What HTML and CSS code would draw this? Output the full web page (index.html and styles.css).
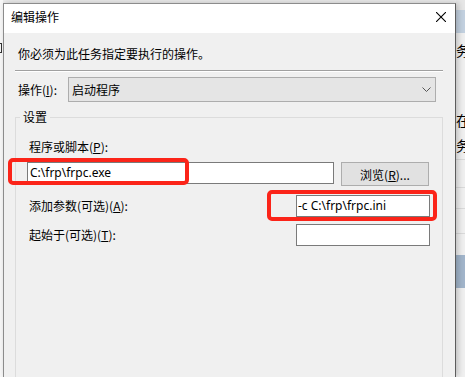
FILE: index.html
```
<!DOCTYPE html>
<html lang="zh-CN">

<head>
    <meta charset="UTF-8">
    <title>编辑操作</title>
    <link rel="stylesheet" href="styles.css">
</head>

<body>

    <div class="desk">
        <div class="back-left"><span class="frag"></span></div>

        <div class="dialog">
            <div class="titlebar">
                <span class="title">编辑操作</span>
                <svg class="close" width="10" height="10" viewBox="0 0 10 10">
                    <path d="M0 0 L10 10 M10 0 L0 10" stroke="#000" stroke-width="1.1" fill="none"/>
                </svg>
            </div>

            <div class="panel">
                <p class="hint">你必须为此任务指定要执行的操作。</p>
                <div class="sep"></div>

                <div class="action-row">
                    <label class="action-label">操作(<u>I</u>):</label>
                    <div class="combo">
                        <span>启动程序</span>
                        <svg width="9" height="5" viewBox="0 0 9 5">
                            <polyline points="0.5,0.5 4.5,4.5 8.5,0.5" stroke="#555" fill="none"/>
                        </svg>
                    </div>
                </div>

                <fieldset class="group">
                    <legend>设置</legend>

                    <div class="field-label">程序或脚本(<u>P</u>):</div>
                    <div class="prog-row">
                        <div class="input wide">C:\frp\frpc.exe</div>
                        <button class="btn">浏览(<u>R</u>)...</button>
                    </div>

                    <div class="arg-row">
                        <label class="arg-label">添加参数(可选)(<u>A</u>):</label>
                        <div class="input narrow">-c C:\frp\frpc.ini</div>
                    </div>

                    <div class="arg-row low">
                        <label class="arg-label">起始于(可选)(<u>T</u>):</label>
                        <div class="input narrow"></div>
                    </div>
                </fieldset>
            </div>
        </div>

        <div class="back-right">
            <div class="rs-top"></div>
            <div class="rs-band head"></div>
            <div class="rs-char first">务</div>
            <div class="rs-char mid">在</div>
            <div class="rs-char">务</div>
            <div class="rs-line l1"></div>
            <div class="rs-line l2"></div>
            <div class="rs-line l3"></div>
            <div class="rs-line l4"></div>
            <div class="rs-band sel"></div>
        </div>

        <!-- red annotation boxes drawn over the screenshot -->
        <div class="mark mark-prog"></div>
        <div class="mark mark-args"></div>
    </div>

</body>

</html>
```

FILE: styles.css
```
* {
    box-sizing: border-box;
}

body {
    margin: 0;
    width: 465px;
    height: 377px;
    overflow: hidden;
    background: #ececec;
    font-family: "Noto Sans CJK SC", "Noto Sans", sans-serif;
    font-size: 12px;
    color: #000;
}

.desk {
    position: relative;
    display: flex;
    height: 377px;
    overflow: hidden;
}

.back-left {
    width: 3px;
    background: #f8f8f8;
    padding-top: 43px;
}

.back-left .frag {
    display: block;
    width: 2px;
    height: 10px;
    border-top: 1px solid #333;
    border-bottom: 1px solid #333;
    border-right: 1px solid #333;
}

.dialog {
    position: relative;
    z-index: 1;
    width: 453px;
    height: 374px;
    margin-top: 3px;
    flex-shrink: 0;
    overflow: hidden;
    background: #f0f0f0;
    border: 1px solid #8c8c8c;
    border-right-color: #5c5c5c;
    border-bottom: 0;
    box-shadow: 2px 0 6px rgba(0, 0, 0, 0.22);
}

.titlebar {
    display: flex;
    justify-content: space-between;
    align-items: flex-start;
    height: 29px;
    padding: 0 9px 0 7px;
    background: #fff;
}

.title {
    line-height: 16px;
    padding-top: 5px;
}

.close {
    margin-top: 8px;
}

.panel {
    padding: 0 12px 0 11px;
}

.hint {
    margin: 13px 0 0;
    padding-left: 3px;
    line-height: 16px;
}

.sep {
    margin-top: 8px;
    border-top: 1px solid #a0a0a0;
    border-bottom: 1px solid #fff;
}

.action-row {
    display: flex;
    align-items: center;
    margin-top: 5px;
}

.action-label {
    width: 53px;
    padding-left: 3px;
}

.combo {
    display: flex;
    justify-content: space-between;
    align-items: center;
    width: 368px;
    height: 25px;
    padding: 0 4px 0 3px;
    background: #e5e5e5;
    border: 1px solid #adadad;
}

.group {
    margin: 7px 0 0;
    padding: 0;
    width: 428px;
    height: 268px;
    border: 1px solid #dcdcdc;
    border-bottom: 0;
}

.group legend {
    margin-left: 4px;
    padding: 0 3px;
    line-height: 16px;
}

.field-label {
    margin-top: 14px;
    padding-left: 13px;
    line-height: 16px;
}

.prog-row {
    display: flex;
    align-items: flex-start;
    margin: 7px 0 0 11px;
}

.input {
    height: 22px;
    padding: 0 2px;
    background: #fff;
    border: 1px solid #7a7a7a;
    font-family: "Noto Sans", "Noto Sans CJK SC", sans-serif;
    line-height: 20px;
}

.wide {
    width: 307px;
}

.narrow {
    width: 134px;
    padding-left: 1px;
}

.btn {
    width: 88px;
    height: 24px;
    margin-left: 7px;
    padding: 0;
    background: #e1e1e1;
    border: 1px solid #adadad;
    font-family: "Noto Sans CJK SC", "Noto Sans", sans-serif;
    font-size: 12px;
    color: #000;
}

.arg-row {
    display: flex;
    align-items: center;
    margin: 9px 0 0 11px;
}

.arg-row.low {
    margin-top: 7px;
}

.arg-label {
    width: 269px;
    padding-left: 2px;
    line-height: 16px;
}

.back-right {
    flex: 1;
    display: flex;
    flex-direction: column;
    overflow: hidden;
    background: #f0f0f0;
}

.rs-top {
    height: 10px;
    background: #e6e6e6;
}

.rs-band.head {
    height: 23px;
    background: #c3d1e0;
}

.rs-char {
    height: 20px;
    line-height: 20px;
    font-size: 14px;
    white-space: nowrap;
    margin-top: 5px;
}

.rs-char.first {
    margin-top: 7px;
}

.rs-char.mid {
    margin-top: 50px;
}

.rs-line {
    height: 1px;
    background: #dadada;
}

.l1 { margin-top: 4px; }
.l2 { margin-top: 27px; }
.l3 { margin-top: 20px; }
.l4 { margin-top: 24px; }

.rs-band.sel {
    height: 33px;
    margin-top: 21px;
    background: #a2b5cb;
}

.mark {
    position: absolute;
    z-index: 2;
    border: 4px solid #fb2419;
    border-radius: 5px;
}

.mark-prog {
    left: 8px;
    top: 158px;
    width: 181px;
    height: 27px;
}

.mark-args {
    left: 267px;
    top: 190px;
    width: 170px;
    height: 31px;
}
```
